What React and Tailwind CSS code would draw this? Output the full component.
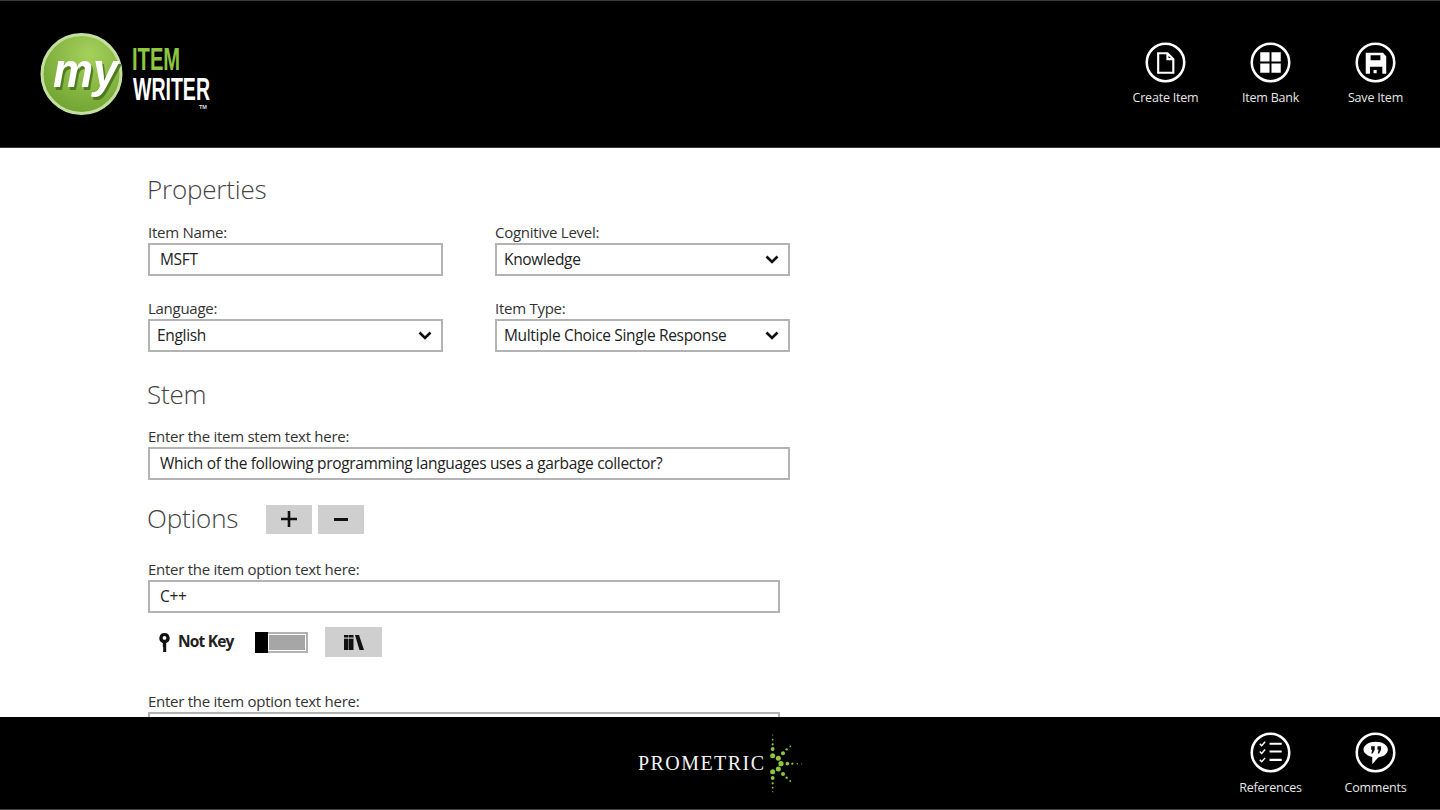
const font = { fontFamily: '"Open Sans", "Noto Sans", sans-serif' };

function IconCircle({ children }) {
  return (
    <svg width="41" height="41" viewBox="0 0 42 42" fill="none">
      <circle cx="21" cy="21" r="19.2" stroke="#fff" strokeWidth="2.6" />
      {children}
    </svg>
  );
}

function ActionButton({ label, gap, children }) {
  return (
    <div className="flex w-[105px] flex-col items-center">
      <IconCircle>{children}</IconCircle>
      <span className={`${gap} text-[12.5px] leading-[18px] tracking-[-0.2px] text-[#e6e6e6]`}>{label}</span>
    </div>
  );
}

function Logo() {
  return (
    <svg width="190" height="92" viewBox="0 0 190 92" className="ml-[36px] self-center">
      <defs>
        <radialGradient id="ball" cx="0.6" cy="0.25" r="0.85">
          <stop offset="0" stopColor="#a5d05c" />
          <stop offset="1" stopColor="#6c9f2c" />
        </radialGradient>
      </defs>
      <circle cx="45.5" cy="46" r="39.5" fill="url(#ball)" stroke="#c4e0a0" strokeWidth="3" />
      <text transform="translate(17 59) scale(.94 1)" fontFamily="Liberation Sans" fontWeight="700" fontStyle="italic" fontSize="48" fill="#fff" className="drop-shadow-[2px_3px_0_#4e7a20]">my</text>
      <text transform="translate(96 42) scale(.65 1)" fontFamily="Liberation Sans" fontWeight="700" fontSize="31" fill="#8dc63f">ITEM</text>
      <text transform="translate(97 72) scale(.63 1)" fontFamily="Liberation Sans" fontWeight="700" fontSize="31" fill="#fff">WRITER</text>
      <text x="163" y="81" fontFamily="Liberation Sans" fontWeight="700" fontSize="5.5" fill="#ddd">TM</text>
    </svg>
  );
}

const burst = [
  [458, 30, 0.6], [458, 44, 0.9], [458, 58, 1.1], [458, 72, 1.9], [458, 92, 2.5],
  [475, 100, 2.5], [489, 85, 2], [500, 73, 1.2], [511, 64, 0.9],
  [483, 116, 2.6], [502, 116, 1.8], [517, 116, 1.1], [532, 116, 0.7], [545, 116, 0.5],
  [475, 132, 2.5], [489, 147, 2], [500, 158, 1.2], [511, 168, 0.9],
  [458, 140, 2.5], [458, 159, 1.9], [458, 175, 1.1], [458, 188, 0.9], [458, 200, 0.6],
];

function Prometric() {
  return (
    <svg width="200" height="80" viewBox="0 0 200 80">
      <text x="18" y="45" fontFamily="Liberation Serif" fontSize="20" fill="#f2f2f2" textLength="126" lengthAdjust="spacing">PROMETRIC</text>
      {burst.map(([x, y, r], i) => (
        <circle key={i} cx={x / 3} cy={y / 3} r={r} fill="#8dc63f" />
      ))}
    </svg>
  );
}

function Chevron() {
  return (
    <svg width="14" height="9" viewBox="0 0 14 9" fill="none">
      <path d="M1.500 1.500 7 7l5.500-5.500" stroke="#111" strokeWidth="2.600" />
    </svg>
  );
}

function TextBox({ value, className }) {
  return (
    <div className={`flex h-[33px] items-center border-2 border-[#b3b3b3] pl-[10px] text-[15.5px] tracking-[-0.33px] text-[#222] ${className}`}>
      {value}
    </div>
  );
}

function SelectBox({ value }) {
  return (
    <div className="flex h-[33px] w-[295px] items-center justify-between border-2 border-[#b3b3b3] pl-[7px] pr-[9px] text-[15.5px] tracking-[-0.33px] text-[#222]">
      <span>{value}</span>
      <Chevron />
    </div>
  );
}

function Label({ children }) {
  return <div className="h-[22px] text-[15px] leading-[23px] tracking-[-0.27px] text-[#333]">{children}</div>;
}

function Heading({ children, className = "" }) {
  return <h2 className={`-ml-[1px] h-[40px] text-[26px] leading-[39px] font-light tracking-[-0.2px] text-[#444] ${className}`}>{children}</h2>;
}

export default function App() {
  return (
    <div className="flex h-screen flex-col overflow-hidden bg-white" style={font}>
      <header className="flex h-[148px] shrink-0 justify-between border-y border-[#3a3a3a] bg-black pr-[12px]">
        <Logo />
        <div className="flex pt-[41px]">
          <ActionButton label="Create Item" gap="mt-[6px]">
            <path d="M13.500 11.500h9.500l6 6v14h-15.500z M23 11.500v6h6" stroke="#fff" strokeWidth="2.200" />
          </ActionButton>
          <ActionButton label="Item Bank" gap="mt-[6px]">
            <path d="M10.500 10.500h9.500v9.500h-9.500z M22 10.500h9.500v9.500H22z M10.500 22h9.500v9.500h-9.500z M22 22h9.500v9.500H22z" fill="#fff" />
          </ActionButton>
          <ActionButton label="Save Item" gap="mt-[6px]">
            <path fillRule="evenodd" d="M11 11h17.500l3.500 3.500V32.500H11z M16 13.700v5h10v-5z M15.300 25.300v7.200h12.700v-7.200z" fill="#fff" />
            <rect x="19" y="28.700" width="3.200" height="3.300" fill="#fff" />
          </ActionButton>
        </div>
      </header>

      <main className="min-h-0 flex-1 overflow-hidden pl-[148px] pt-[22px]">
        <Heading>Properties</Heading>
        <div className="mt-[11px] grid w-[642px] grid-cols-[295px_295px] justify-between gap-y-[21px]">
          <div>
            <Label>Item Name:</Label>
            <TextBox value="MSFT" className="w-[295px]" />
          </div>
          <div>
            <Label>Cognitive Level:</Label>
            <SelectBox value="Knowledge" />
          </div>
          <div>
            <Label>Language:</Label>
            <SelectBox value="English" />
          </div>
          <div>
            <Label>Item Type:</Label>
            <SelectBox value="Multiple Choice Single Response" />
          </div>
        </div>

        <Heading className="mt-[23px]">Stem</Heading>
        <div className="mt-[10px]">
          <Label>Enter the item stem text here:</Label>
          <TextBox value="Which of the following programming languages uses a garbage collector?" className="w-[642px]" />
        </div>

        <div className="mt-[19px] flex items-center">
          <Heading>Options</Heading>
          <button className="ml-[28px] flex h-[29px] w-[46px] items-center justify-center bg-[#cfcfcf]">
            <svg width="16" height="16" viewBox="0 0 16 16"><path d="M6.700 0h2.600v6.700H16v2.600H9.300V16H6.700V9.300H0V6.700h6.700z" fill="#111" /></svg>
          </button>
          <button className="ml-[6px] flex h-[29px] w-[46px] items-center justify-center bg-[#cfcfcf]">
            <svg width="14" height="3" viewBox="0 0 14 3"><rect width="14" height="3" fill="#111" /></svg>
          </button>
        </div>

        <div className="mt-[19px]">
          <Label>Enter the item option text here:</Label>
          <TextBox value="C++" className="w-[632px]" />
        </div>

        <div className="mt-[14px] flex h-[30px] items-center">
          <svg width="11" height="19" viewBox="0 0 11 19" className="ml-[11px]">
            <path fillRule="evenodd" d="M5.500 0a5.200 5.200 0 0 1 1.700 10.100V19H4.300l-.5-1 .8-1-.8-1 .8-1-.8-1v-3.900A5.200 5.200 0 0 1 5.500 0zm0 3a1.800 1.800 0 1 0 0 3.800 1.800 1.800 0 0 0 0-3.800z" fill="#111" />
          </svg>
          <span className="ml-[8px] w-[57px] text-[15.5px] font-bold tracking-[-0.8px] whitespace-nowrap text-[#222]">Not Key</span>
          <div className="ml-[20px] flex h-[21px] w-[53px] border-2 border-[#b3b3b3] bg-white">
            <div className="-my-[2px] -ml-[2px] w-[13px] bg-black" />
            <div className="m-[1px] flex-1 bg-[#a6a6a6]" />
          </div>
          <button className="ml-[17px] flex h-[30px] w-[57px] items-center justify-center bg-[#cfcfcf]">
            <svg width="20" height="15" viewBox="0 0 20 15">
              <path d="M0 0h4.500v15H0z M5 0h4.500v15H5z M11 0h4l5 15h-4.500z" fill="#111" />
              <path d="M0 2.500h9.500v1.200H0z" fill="#cfcfcf" />
            </svg>
          </button>
        </div>

        <div className="mt-[33px]">
          <Label>Enter the item option text here:</Label>
          <TextBox value="" className="w-[632px]" />
        </div>
      </main>

      <footer className="relative flex h-[93px] shrink-0 items-start justify-end border-b border-[#3a3a3a] bg-black pr-[12px] pt-[15px]">
        <div className="absolute left-[620px] top-[8px]">
          <Prometric />
        </div>
        <ActionButton label="References" gap="mt-[6px]">
          <path d="M10 12l2 2 3.500-4 M10 20l2 2 3.500-4 M10 28.500l2 2 3.500-4" stroke="#fff" strokeWidth="1.500" fill="none" />
          <path d="M20 12h12.500 M20 20h12.500 M20 28.500h12.500" stroke="#fff" strokeWidth="2.200" />
        </ActionButton>
        <ActionButton label="Comments" gap="mt-[6px]">
          <path d="M21.200 10c7 0 12.500 3.500 12.500 8s-5 7.800-10 8l-6 7v-7.400c-4.500-1-9-3.600-9-7.600 0-4.500 5.500-8 12.500-8z" fill="#fff" />
          <path d="M16.500 14.500h3.700v3.700l-2 3.800h-1.500l1-3.800h-1.200z M23 14.500h3.700v3.700l-2 3.800h-1.500l1-3.800H23z" fill="#111" />
        </ActionButton>
      </footer>
    </div>
  );
}
